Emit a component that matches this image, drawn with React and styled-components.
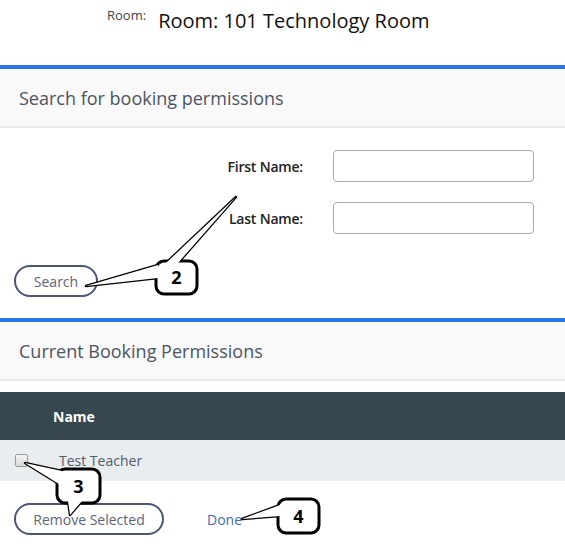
import React from 'react'
import styled, { createGlobalStyle } from 'styled-components'

const accent = '#2a73e8'
const ink = '#333b44'
const muted = '#4c5562'

const GlobalStyle = createGlobalStyle`
body {
    margin: 0;
    background: #fff;
    font-family: "Open Sans", "Liberation Sans", sans-serif;
    color: ${ink};
}
`

const callouts = [
    {
        n: '2', x: 156, y: 261, w: 41, h: 33,
        wedges: [
            [[86, 286], [158, 265], [158, 278]],
            [[236, 197], [166, 263], [178, 263]],
        ],
    },
    {
        n: '3', x: 57, y: 469, w: 43, h: 34,
        wedges: [
            [[25, 463], [62, 471], [59, 484]],
            [[70, 515], [68, 501], [82, 501]],
        ],
    },
    {
        n: '4', x: 278, y: 499, w: 41, h: 34,
        wedges: [
            [[242, 519], [280, 505], [280, 516]],
        ],
    },
]

const Callout = ({ n, x, y, w, h, wedges }) => (
    <g>
        {wedges.map((pts, i) => (
            <polygon key={'s' + i} points={pts.map(p => p.join(',')).join(' ')} fill="#fff" stroke="#000" strokeWidth="2.5" strokeLinejoin="round" />
        ))}
        <rect x={x} y={y} width={w} height={h} rx="8" fill="#fff" stroke="#000" strokeWidth="3" />
        {wedges.map((pts, i) => (
            <polygon key={'f' + i} points={pts.map(p => p.join(',')).join(' ')} fill="#fff" />
        ))}
        <CalloutText x={x + w / 2} y={y + h / 2 + 6.5} textAnchor="middle">{n}</CalloutText>
    </g>
)

const App = () => {
    return (
        <Page>
            <GlobalStyle />
            <TopBar>
                <RoomLabel>Room:</RoomLabel>
                <RoomTitle>Room: 101 Technology Room</RoomTitle>
            </TopBar>

            <Panel>
                <PanelHeader>Search for booking permissions</PanelHeader>
                <SearchForm>
                    <Field>
                        <FieldLabel>First Name:</FieldLabel>
                        <Input />
                    </Field>
                    <Field>
                        <FieldLabel>Last Name:</FieldLabel>
                        <Input />
                    </Field>
                    <Actions top="11px">
                        <PillButton width="84px">Search</PillButton>
                    </Actions>
                </SearchForm>
            </Panel>

            <Panel>
                <PanelHeader>Current Booking Permissions</PanelHeader>
                <Table>
                    <HeadRow>
                        <HeadCell>Name</HeadCell>
                    </HeadRow>
                    <BodyRow>
                        <Check />
                        <Cell>Test Teacher</Cell>
                    </BodyRow>
                </Table>
                <Actions top="22px" left="14px">
                    <PillButton width="150px">Remove Selected</PillButton>
                    <DoneLink>Done</DoneLink>
                </Actions>
            </Panel>

            <Overlay width="565" height="546" viewBox="0 0 565 546">
                {callouts.map(c => <Callout key={c.n} {...c} />)}
            </Overlay>
        </Page>
    )
}

const Page = styled.div`
position: relative;
width: 565px;
height: 546px;
overflow: hidden;
`

const TopBar = styled.div`
height: 65px;
display: flex;
align-items: flex-start;
padding-left: 107px;
padding-top: 7px;
box-sizing: border-box;
`

const RoomLabel = styled.span`
font-size: 13px;
line-height: 16px;
color: #444;
margin-right: 12px;
`

const RoomTitle = styled.span`
font-size: 20px;
line-height: 28px;
color: #111;
`

const Panel = styled.section`
border-top: 4px solid ${accent};
`

const PanelHeader = styled.div`
background: #f9f9f9;
border-bottom: 2px solid #e7e7ec;
height: 57px;
display: flex;
align-items: center;
padding-left: 19px;
font-size: 18px;
color: ${muted};
`

const SearchForm = styled.div`
padding: 22px 0 21px 14px;
display: flex;
flex-direction: column;
gap: 20px;
`

const Field = styled.div`
display: flex;
align-items: center;
height: 32px;
`

const FieldLabel = styled.label`
width: 289px;
text-align: right;
font-size: 14px;
font-weight: 600;
letter-spacing: -0.2px;
color: #222;
margin-right: 30px;
`

const Input = styled.div`
width: 199px;
height: 30px;
border: 1px solid #a4a9bb;
border-radius: 4px;
`

const Actions = styled.div`
display: flex;
align-items: center;
gap: 43px;
margin-top: ${props => props.top || '0'};
padding-left: ${props => props.left || '0'};
`

const PillButton = styled.button`
width: ${props => props.width};
height: 32px;
border: 2px solid #4b5675;
border-radius: 16px;
background: #fff;
font-family: inherit;
font-size: 14px;
color: #5b6478;
padding: 0;
`

const DoneLink = styled.a`
font-size: 14px;
color: #3c6db4;
`

const Table = styled.div`
margin-top: 11px;
`

const HeadRow = styled.div`
height: 48px;
background: #36474f;
display: flex;
align-items: center;
padding-left: 53px;
`

const HeadCell = styled.div`
font-size: 14px;
font-weight: 700;
color: #fff;
`

const BodyRow = styled.div`
height: 41px;
background: #e9edf0;
display: flex;
align-items: center;
padding-left: 15px;
`

const Check = styled.span`
width: 11px;
height: 11px;
border: 1px solid #9a9a9a;
border-radius: 2px;
background: linear-gradient(#f4f4f4, #d8d8d8);
margin-right: 31px;
`

const Cell = styled.div`
font-size: 14px;
color: #555c66;
`

const Overlay = styled.svg`
position: absolute;
left: 0;
top: 0;
pointer-events: none;
`

const CalloutText = styled.text`
font-family: "Open Sans", "Liberation Sans", sans-serif;
font-weight: 700;
font-size: 18px;
fill: #000;
`

export default App
